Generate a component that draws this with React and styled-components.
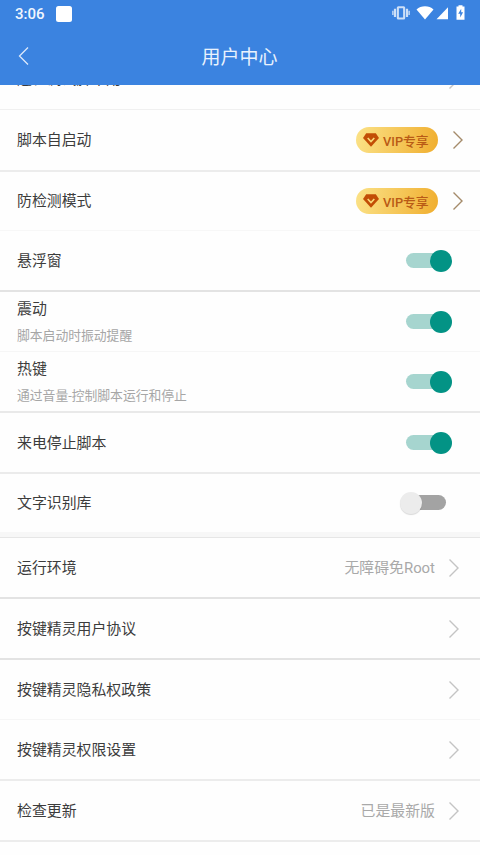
import React from 'react';
import styled, { createGlobalStyle } from 'styled-components';

const rows = [
  { title: '远程调试脚本用', type: 'arrow', height: 25, line: '#f0f0f0', cut: true },
  { title: '脚本自启动', type: 'vip', height: 62, line: '#ececec', thick: true },
  { title: '防检测模式', type: 'vip', height: 59, line: '#f7f7f7' },
  { title: '悬浮窗', type: 'switch', on: true, height: 61, line: '#e3e3e3', thick: true },
  { title: '震动', desc: '脚本启动时振动提醒', type: 'switch', on: true, height: 60, line: '#f6f6f6' },
  { title: '热键', desc: '通过音量-控制脚本运行和停止', type: 'switch', on: true, height: 61, line: '#e9e9e9', thick: true },
  { title: '来电停止脚本', type: 'switch', on: true, height: 61, line: '#ebebeb', thick: true },
  { title: '文字识别库', type: 'switch', on: false, height: 58, line: '#fefefe' },
];

const links = [
  { title: '运行环境', value: '无障碍免Root', type: 'arrow', height: 61, line: '#e3e3e3', thick: true },
  { title: '按键精灵用户协议', type: 'arrow', height: 61, line: '#e3e3e3', thick: true },
  { title: '按键精灵隐私权政策', type: 'arrow', height: 60, line: '#f6f6f6' },
  { title: '按键精灵权限设置', type: 'arrow', height: 61, line: '#ececec', thick: true },
  { title: '检查更新', value: '已是最新版', type: 'arrow', height: 61, line: '#ececec', thick: true },
];

function Arrow({ color }) {
  return (
    <svg width="12" height="20" viewBox="0 0 12 20" fill="none" stroke={color} strokeWidth="1.4">
      <path d="M1.5 1.5 10 10 1.5 18.5" />
    </svg>
  );
}

function VipBadge() {
  return (
    <Badge>
      <svg width="16" height="14" viewBox="0 0 16 14">
        <path d="M3.2 .3h9.6L16 5 8 13.8 0 5z" fill="#c24d05" />
        <path d="m4.7 5 3.3 3.5L11.3 5" fill="none" stroke="#f9d978" strokeWidth="1.6" />
      </svg>
      VIP专享
    </Badge>
  );
}

function Row({ item }) {
  return (
    <RowBox $height={item.height} $line={item.line} $thick={item.thick} $cut={item.cut}>
      <Texts>
        <RowTitle>{item.title}</RowTitle>
        {item.desc && <Desc>{item.desc}</Desc>}
      </Texts>
      {item.type === 'vip' && (
        <VipSide>
          <VipBadge />
          <Arrow color="#a58b6a" />
        </VipSide>
      )}
      {item.type === 'switch' && (
        <Switch $on={item.on}>
          <Track $on={item.on} />
          <Thumb $on={item.on} />
        </Switch>
      )}
      {item.type === 'arrow' && (
        <ArrowSide>
          {item.value && <Value>{item.value}</Value>}
          <Arrow color="#c4c4c4" />
        </ArrowSide>
      )}
    </RowBox>
  );
}

function App() {
  return (
    <Page>
      <GlobalStyle />
      <StatusBar>
        <Clock>3:06</Clock>
        <Notice />
        <StatusIcons>
          {/* vibrate, wifi, signal */}
          <svg width="64" height="16" viewBox="0 0 64 16" fill="#fff">
            <g opacity=".75">
              <path
                fillRule="evenodd"
                d="M6.3 1.2h5.4q1.5 0 1.5 1.5v10.4q0 1.5-1.5 1.5H6.300q-1.500 0-1.500-1.500V2.700q0-1.500 1.500-1.500zM6.900 3.300v9.200h4.200V3.300z"
              />
              <path d="M1.900 3.800h2.200v8.200H1.900zM.2 5.800h1.300v4.200H.2zM13.900 3.800h2.200v8.200h-2.200zM16.500 5.800h1.300v4.200h-1.300z" />
            </g>
            <path d="M24.500 4.500Q28 1.300 33 1.300t8.500 3.200L33 14.400z" />
            <path d="M56 2.300v12H44.500z" />
          </svg>
          <svg width="9" height="16" viewBox="0 0 9 16">
            <path d="M2.500 1.500V.3h4v1.200h2v13.200h-8V1.500z" fill="#fff" />
            <path d="M5.200 3.800 2.200 8.700h2v3.900l2.900-5.300H5.200z" fill="#3b83e0" />
          </svg>
        </StatusIcons>
      </StatusBar>
      <NavBar>
        <BackButton>
          <svg width="11" height="20" viewBox="0 0 11 20" fill="none" stroke="#dce9fb" strokeWidth="1.3">
            <path d="M10 1.5 1.5 10 10 18.500" />
          </svg>
        </BackButton>
        <NavTitle>用户中心</NavTitle>
        <NavSpace />
      </NavBar>
      <List>
        {rows.map((item) => (
          <Row key={item.title} item={item} />
        ))}
        <Gap />
        {links.map((item) => (
          <Row key={item.title} item={item} />
        ))}
      </List>
    </Page>
  );
}

export default App;

const GlobalStyle = createGlobalStyle`
  * {
    box-sizing: border-box;
  }

  body {
    margin: 0;
    background: #fefefe;
    overflow: hidden;
    font-family: Roboto, 'Noto Sans CJK SC', sans-serif;
  }

  svg {
    display: block;
    flex-shrink: 0;
  }
`;

const Page = styled.div`
  display: flex;
  flex-direction: column;
  width: 480px;
  height: 855px;
  overflow: hidden;
  background: #fefefe;
`;

const StatusBar = styled.div`
  display: flex;
  align-items: center;
  flex-shrink: 0;
  height: 27px;
  padding: 0 15px;
  background: #3b83e0;
`;

const Clock = styled.div`
  width: 41px;
  color: #f0f6fe;
  font-size: 15px;
  font-weight: 500;
`;

const Notice = styled.div`
  width: 16px;
  height: 16px;
  border-radius: 2.5px;
  background: #fff;
`;

const StatusIcons = styled.div`
  display: flex;
  align-items: center;
  margin-left: auto;
  padding-bottom: 1px;
`;

const NavBar = styled.div`
  display: flex;
  align-items: center;
  flex-shrink: 0;
  height: 58px;
  padding: 0 18px;
  background: #3b83e0;
`;

const BackButton = styled.div`
  width: 60px;
`;

const NavTitle = styled.div`
  flex: 1;
  padding-top: 3px;
  color: #e9f2fd;
  font-size: 19px;
  line-height: 28px;
  text-align: center;
`;

const NavSpace = styled.div`
  width: 61px;
`;

const List = styled.div`
  display: flex;
  flex-direction: column;
`;

const RowBox = styled.div`
  display: flex;
  align-items: ${(props) => (props.$cut ? 'flex-end' : 'center')};
  justify-content: space-between;
  flex-shrink: 0;
  height: ${(props) => props.$height}px;
  padding-left: 17px;
  padding-bottom: ${(props) => (props.$cut ? '19px' : '0')};
  overflow: hidden;
  border-bottom: ${(props) => (props.$thick ? 2 : 1)}px solid ${(props) => props.$line};
`;

const Texts = styled.div`
  display: flex;
  flex-direction: column;
`;

const RowTitle = styled.div`
  color: #3c3c3c;
  font-size: 14.9px;
  line-height: 22px;
`;

const Desc = styled.div`
  margin-top: 6px;
  color: #a6a6a6;
  font-size: 12.8px;
  line-height: 20px;
`;

const VipSide = styled.div`
  display: flex;
  align-items: center;
  gap: 14px;
  padding-right: 16px;
`;

const Badge = styled.div`
  display: flex;
  align-items: center;
  gap: 4px;
  width: 82px;
  height: 26px;
  padding-left: 7px;
  border-radius: 13px;
  background: linear-gradient(100deg, #fbe287, #f0ae2f);
  color: #b95a15;
  font-size: 12.8px;
  font-weight: 500;
  white-space: nowrap;
`;

const Switch = styled.div`
  display: flex;
  align-items: center;
  flex-direction: ${(props) => (props.$on ? 'row' : 'row-reverse')};
  margin-right: ${(props) => (props.$on ? 28 : 34)}px;
`;

const Track = styled.div`
  width: 36px;
  height: 15px;
  border-radius: 8px;
  margin: ${(props) => (props.$on ? '0 -12px 0 0' : '0 0 0 -12px')};
  background: ${(props) => (props.$on ? '#a6d5cf' : '#a3a3a3')};
`;

const Thumb = styled.div`
  position: relative;
  width: 22px;
  height: 22px;
  border-radius: 50%;
  background: ${(props) => (props.$on ? '#039385' : '#ececec')};
  box-shadow: ${(props) => (props.$on ? 'none' : '0 1px 1px rgba(0, 0, 0, 0.15)')};
`;

const ArrowSide = styled.div`
  display: flex;
  align-items: center;
  gap: 13px;
  padding-right: 20px;
`;

const Value = styled.div`
  color: #a9a9a9;
  font-size: 14.9px;
  line-height: 22px;
`;

const Gap = styled.div`
  height: 6px;
  background: #f7f7f7;
  border-bottom: 1px solid #e6e6e6;
`;
